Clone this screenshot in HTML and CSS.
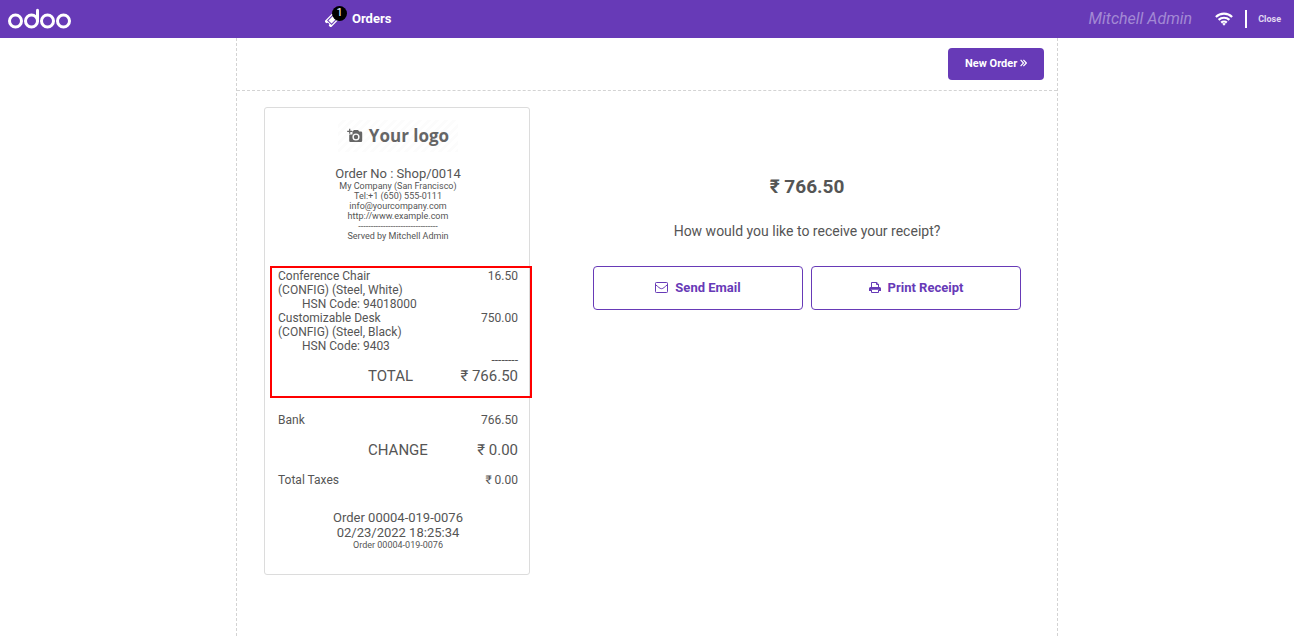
FILE: index.html
```html
<!DOCTYPE html>
<html lang="en">
<head>
<meta charset="utf-8">
<title>Odoo POS</title>
<meta name="viewport" content="width=device-width, initial-scale=1">
<link rel="stylesheet" href="styles.css">
</head>
<body>
<header class="topbar">
  <a class="brand" href="#" aria-label="odoo">
    <svg width="64" height="22" viewBox="0 0 64 22" fill="none" stroke="#fff" stroke-width="3">
      <circle cx="7.5" cy="13" r="6"/><circle cx="23.5" cy="13" r="6"/>
      <circle cx="39.5" cy="13" r="6"/><circle cx="55.5" cy="13" r="6"/>
      <path d="M29.5 2.3V13" stroke-linecap="round"/>
    </svg>
  </a>
  <button class="orders" type="button">
    <span class="ticket">
      <svg width="15" height="15" viewBox="0 0 15 15">
        <g transform="rotate(-45 7.5 7.5)">
          <path fill="#fff" fill-rule="evenodd" d="M0.5 3h14v2.900a1.600 1.600 0 0 0 0 3.200V12h-14V9.100a1.600 1.600 0 0 0 0-3.200zM3 4.300v6.400h9V4.300zM4 5.300h7v4.400H4z"/>
        </g>
      </svg>
      <span class="badge">1</span>
    </span>
    <span>Orders</span>
  </button>
  <div class="status">
    <span class="user">Mitchell Admin</span>
    <svg class="wifi" width="18" height="14" viewBox="0 0 18 14" fill="none" stroke="#fff" stroke-width="2.200">
      <path d="M0.900 5a11.600 11.600 0 0 1 16.200 0M3.600 7.900a7.800 7.800 0 0 1 10.800 0M6.200 10.600a4.100 4.100 0 0 1 5.600 0"/>
      <path d="M7.200 11.800a2.600 2.600 0 0 1 3.600 0L9 13.700z" fill="#fff" stroke="none"/>
    </svg>
    <button class="close" type="button">Close</button>
  </div>
</header>
<main class="screen">
  <div class="actions">
    <button class="next" type="button">New Order
      <svg width="7" height="8" viewBox="0 0 7 8" fill="none" stroke="#fff" stroke-width="1.200"><path d="M.6.9 3.500 4 .6 7.100M3.400.9 6.300 4 3.400 7.100"/></svg>
    </button>
  </div>
  <div class="content">
    <section class="receipt-column">
      <article class="receipt">
        <div class="logo">
          <svg width="16" height="16" viewBox="0 0 16 16">
            <path fill="#666" fill-rule="evenodd" d="M5.500 3H6l1-1h4l1.200 1.600H14a1.200 1.200 0 0 1 1.200 1.200v8A1.200 1.200 0 0 1 14 14H3.400a1.200 1.200 0 0 1-1.200-1.200V6.500H5.500zM9 5.400a3.600 3.600 0 1 0 0 7.200 3.600 3.600 0 0 0 0-7.200zM9 6.800a2.200 2.200 0 1 1 0 4.400 2.200 2.200 0 0 1 0-4.400z"/>
            <path d="M2.700.8v5M.2 3.300h5" stroke="#666" stroke-width="1.200"/>
          </svg>
          <span>Your logo</span>
        </div>
        <div class="company">
          <p class="medium">Order No : Shop/0014</p>
          <p>My Company (San Francisco)</p>
          <p>Tel:+1 (650) 555-0111</p>
          <p>info@yourcompany.com</p>
          <p>http://www.example.com</p>
          <p>--------------------------------</p>
          <p>Served by Mitchell Admin</p>
        </div>
        <div class="lines">
          <div class="row"><span>Conference Chair<br>(CONFIG) (Steel, White)</span><span>16.50</span></div>
          <p class="code">HSN Code: 94018000</p>
          <div class="row"><span>Customizable Desk<br>(CONFIG) (Steel, Black)</span><span>750.00</span></div>
          <p class="code">HSN Code: 9403</p>
          <p class="rule">--------</p>
          <div class="row sum"><span>TOTAL</span><span>₹ 766.50</span></div>
          <div class="highlight"></div>
        </div>
        <div class="payments">
          <div class="row"><span>Bank</span><span>766.50</span></div>
          <div class="row sum"><span>CHANGE</span><span>₹ 0.00</span></div>
          <div class="row"><span>Total Taxes</span><span>₹ 0.00</span></div>
        </div>
        <div class="company">
          <p class="medium">Order 00004-019-0076</p>
          <p class="medium">02/23/2022 18:25:34</p>
          <p>Order 00004-019-0076</p>
        </div>
      </article>
    </section>
    <section class="delivery">
      <h1 class="amount">₹ 766.50</h1>
      <p class="question">How would you like to receive your receipt?</p>
      <div class="options">
        <button class="option" type="button">
          <svg width="13" height="11" viewBox="0 0 13 11" fill="none" stroke="currentColor"><rect x=".5" y=".5" width="12" height="10" rx=".8"/><path d="M.7 2.800C3.300 4.800 4.700 6.700 6.500 6.700S9.700 4.800 12.300 2.800"/></svg>
          Send Email
        </button>
        <button class="option" type="button">
          <svg width="12" height="11" viewBox="0 0 12 11" fill="none" stroke="currentColor"><path d="M2.500 5.500v-5h5.300l1.700 1.700v3.300M7.500.5v2h2M2.500 8v2.500h7V8"/><path d="M0 6.500A1.500 1.500 0 0 1 1.500 5h9A1.500 1.500 0 0 1 12 6.500V9h-2V7.800H2V9H0z" fill="currentColor" stroke="none"/></svg>
          Print Receipt
        </button>
      </div>
    </section>
  </div>
</main>
</body>
</html>
```

FILE: styles.css
```css
* { box-sizing: border-box; }

body {
  margin: 0;
  min-height: 100vh;
  display: flex;
  flex-direction: column;
  background: #fff;
  color: #555;
  font-family: Roboto, "Liberation Sans", sans-serif;
  font-size: 12px;
  line-height: 14px;
}

p, h1 { margin: 0; }
button { font-family: inherit; cursor: pointer; }
svg { flex: none; }

.topbar {
  display: flex;
  align-items: center;
  height: 38px;
  background: #673ab7;
  color: #fff;
}

.brand {
  display: flex;
  flex: 0 0 319px;
  padding-left: 8px;
}

.orders {
  display: flex;
  align-items: center;
  gap: 12px;
  padding: 0 6px 2px;
  border: 0;
  background: none;
  color: #fff;
  font-size: 13px;
  font-weight: 700;
}

.ticket { position: relative; display: flex; padding-top: 2px; }

.badge {
  position: absolute;
  top: -4px;
  left: 7px;
  width: 15px;
  height: 15px;
  border-radius: 50%;
  background: #000;
  font-size: 11px;
  font-weight: 400;
  line-height: 14px;
  text-align: center;
}

.status {
  display: flex;
  align-items: center;
  margin-left: auto;
}

.user {
  color: #a389d4;
  font-size: 16px;
  font-style: italic;
}

.wifi { margin: 0 12px 0 23px; }

.close {
  height: 18px;
  padding: 0 13px 0 11px;
  border: 0;
  border-left: 2px solid #fff;
  background: none;
  color: #e1d8f1;
  font-size: 9px;
  font-weight: 700;
}

.screen {
  flex: 1;
  display: flex;
  flex-direction: column;
  width: 100%;
  max-width: 822px;
  margin: 0 auto;
  border: 1px dashed #d3d3d3;
  border-width: 0 1px;
}

.actions {
  display: flex;
  justify-content: flex-end;
  padding: 10px 13px;
  border-bottom: 1px dashed #d3d3d3;
}

.next {
  width: 96px;
  height: 32px;
  padding: 0 0 2px;
  border: 0;
  border-radius: 4px;
  background: #673ab7;
  color: #fff;
  font-size: 11px;
  font-weight: 700;
}

.content {
  display: grid;
  grid-template-columns: 320fr 500fr;
}

.receipt-column { padding: 16px 27px 32px; }

.receipt {
  display: flex;
  flex-direction: column;
  padding: 12px 11px 24px 13px;
  border: 1px solid #dcdcdc;
  border-radius: 3px;
}

.logo {
  display: flex;
  align-items: center;
  justify-content: center;
  gap: 6px;
  align-self: center;
  width: 120px;
  height: 32px;
  margin-bottom: 14px;
  background: repeating-linear-gradient(135deg, #fff 0 3px, #fcfcfc 3px 6px);
  color: #666;
  font-family: "Open Sans", sans-serif;
  font-size: 17px;
  font-weight: 700;
}

.company {
  font-size: 9px;
  line-height: 10px;
  text-align: center;
}

.medium { font-size: 13px; line-height: 15px; }

.lines { position: relative; margin: 28px 0; }

.row { display: flex; justify-content: space-between; }
.code { padding-left: 24px; }
.rule { text-align: right; }

.sum {
  padding-left: 90px;
  font-size: 15px;
  line-height: 18px;
}

.highlight {
  position: absolute;
  inset: -3px -14px -13px -8px;
  border: 2px solid #f00;
}

.payments {
  display: grid;
  gap: 14px;
  margin-bottom: 23px;
}

.delivery {
  padding: 84px 36px 0;
  text-align: center;
}

.amount {
  margin-bottom: 23px;
  font-size: 19px;
  line-height: 24px;
}

.question {
  margin-bottom: 26px;
  font-size: 14px;
  line-height: 18px;
}

.options {
  display: grid;
  grid-template-columns: 1fr 1fr;
  gap: 8px;
}

.option {
  display: flex;
  align-items: center;
  justify-content: center;
  gap: 7px;
  height: 44px;
  padding-bottom: 2px;
  border: 1px solid #673ab7;
  border-radius: 4px;
  background: #fff;
  color: #673ab7;
  font-size: 13px;
  font-weight: 700;
}
```
